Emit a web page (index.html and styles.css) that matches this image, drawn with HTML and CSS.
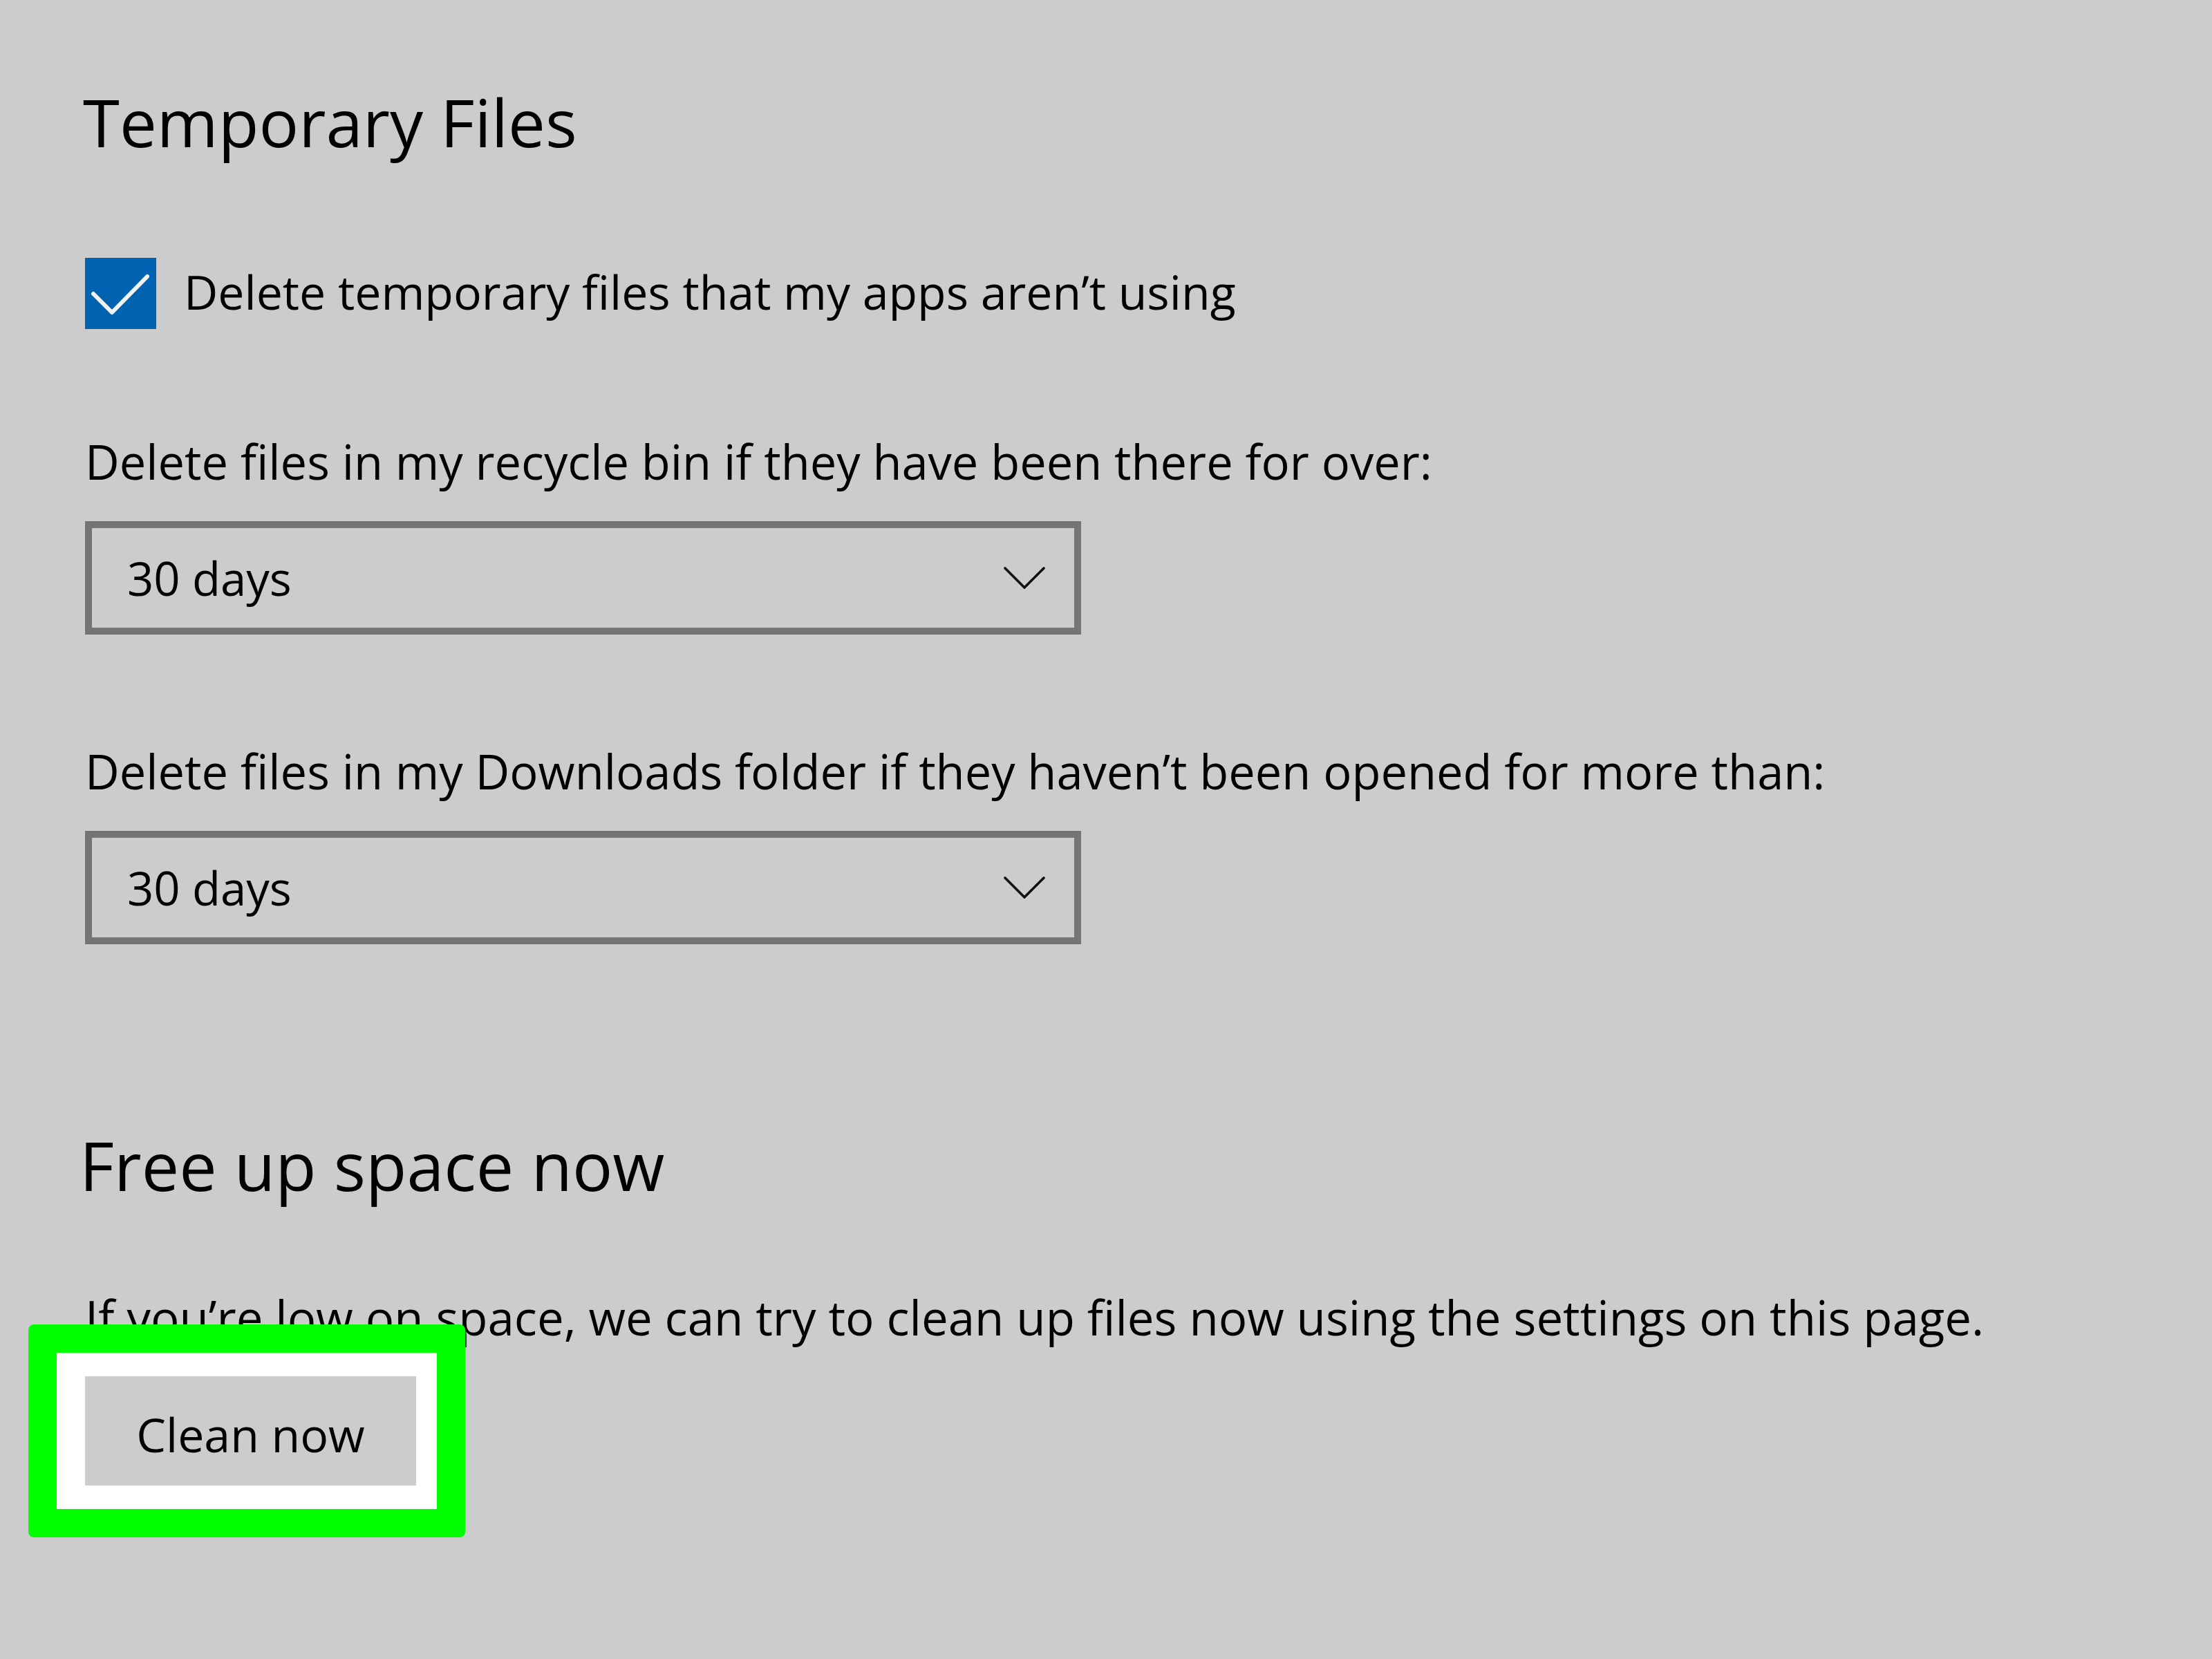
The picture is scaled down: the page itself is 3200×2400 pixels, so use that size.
FILE: index.html
```html
<!DOCTYPE html>
<html lang="en">
<head>
<meta charset="utf-8">
<title>Storage settings</title>
<link rel="stylesheet" href="styles.css">
</head>
<body>
<main class="page">
  <h1 class="title main-title">Temporary Files</h1>

  <label class="check-row">
    <span class="checkbox">
      <svg class="checkmark" viewBox="0 0 103 103" width="103" height="103" aria-hidden="true">
        <polyline points="12,52 39,79 90,27" />
      </svg>
    </span>
    <span class="check-label">Delete temporary files that my apps aren’t using</span>
  </label>

  <p class="field-label">Delete files in my recycle bin if they have been there for over:</p>
  <div class="select">
    <span class="select-value">30 days</span>
    <svg class="chevron" viewBox="0 0 60 32" width="60" height="32" aria-hidden="true">
      <polyline points="2,2 30,30 58,2" />
    </svg>
  </div>

  <p class="field-label second">Delete files in my Downloads folder if they haven’t been opened for more than:</p>
  <div class="select">
    <span class="select-value">30 days</span>
    <svg class="chevron" viewBox="0 0 60 32" width="60" height="32" aria-hidden="true">
      <polyline points="2,2 30,30 58,2" />
    </svg>
  </div>

  <h2 class="title sub-title">Free up space now</h2>
  <p class="desc">If you’re low on space, we can try to clean up files now using the settings on this page.</p>

  <div class="btn-wrap">
    <span class="highlight"></span>
    <button class="btn" type="button">Clean now</button>
  </div>
</main>
</body>
</html>
```
FILE: styles.css
```css
html, body {
  margin: 0;
  background: #cccccc;
}

body {
  font-family: "Open Sans", "Noto Sans", sans-serif;
  color: #000;
}

.page {
  box-sizing: border-box;
  min-height: 2400px;
  padding: 111px 0 0 123px;
}

.title {
  margin: 0;
  font-size: 96px;
  line-height: 130px;
  font-weight: 400;
}

.main-title {
  margin-left: -3px;
}

.check-row {
  display: flex;
  align-items: flex-start;
  gap: 40px;
  margin-top: 132px;
}

.checkbox {
  flex: none;
  display: block;
  width: 103px;
  height: 103px;
  background: #0063b1;
}

.checkmark {
  display: block;
}

.checkmark polyline {
  fill: none;
  stroke: #f2f2f2;
  stroke-width: 6;
  stroke-linecap: round;
  stroke-linejoin: round;
}

.check-label {
  margin-top: 3px;
  font-size: 68px;
  line-height: 92px;
}

.field-label {
  margin: 146px 0 0;
  font-size: 68.6px;
  line-height: 92px;
}

.field-label.second {
  margin-top: 152px;
}

.select {
  box-sizing: border-box;
  width: 1441px;
  height: 164px;
  margin-top: 40px;
  border: 10px solid #747474;
  padding: 0 42px 0 51px;
  display: flex;
  align-items: center;
  justify-content: space-between;
  font-size: 67px;
  line-height: 92px;
}

.chevron {
  display: block;
  flex: none;
}

.chevron polyline {
  fill: none;
  stroke: #111;
  stroke-width: 3.6;
  stroke-linecap: round;
  stroke-linejoin: miter;
}

.sub-title {
  margin-top: 254px;
  margin-left: -8px;
  font-size: 97px;
}

.desc {
  margin: 109px 0 0;
  font-size: 69px;
  line-height: 92px;
}

.btn-wrap {
  position: relative;
  display: flex;
  width: 479px;
  margin-top: 40px;
}

.highlight {
  position: absolute;
  left: -82px;
  top: -75px;
  width: 632px;
  height: 308px;
  box-sizing: border-box;
  border: 41px solid #00ff00;
  border-radius: 8px;
  background: #ffffff;
}

.btn {
  position: relative;
  box-sizing: border-box;
  width: 479px;
  height: 158px;
  margin: 0;
  padding: 9px 0 0;
  border: none;
  background: #cccccc;
  color: #000;
  font-family: "Open Sans", "Noto Sans", sans-serif;
  font-size: 68px;
  line-height: 92px;
}
```
